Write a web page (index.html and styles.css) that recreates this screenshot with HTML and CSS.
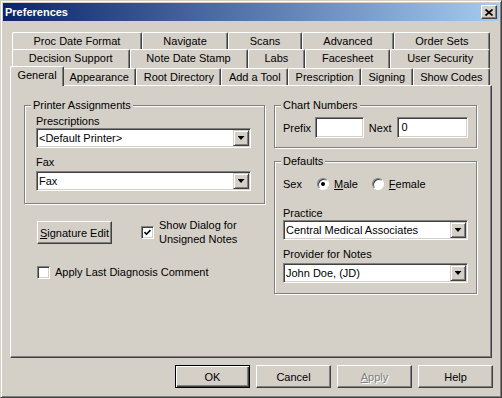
FILE: index.html
```html
<!DOCTYPE html>
<html>
<head>
    <meta charset="utf-8" />
    <title>Preferences</title>
    <link rel="stylesheet" href="styles.css">
</head>
<body>
    <div class="window">
        <div class="titlebar">
            <span class="title">Preferences</span>
            <span class="close">
                <svg width="8" height="7" viewBox="0 0 8 7"><path d="M0.5 0.5 L7.5 6.5 M7.5 0.5 L0.5 6.5" stroke="#000" stroke-width="1.7" fill="none" /></svg>
            </span>
        </div>
        <div class="client">
            <div class="tabs">
                <div class="tab-row">
                    <div class="tab">Proc Date Format</div>
                    <div class="tab">Navigate</div>
                    <div class="tab">Scans</div>
                    <div class="tab">Advanced</div>
                    <div class="tab">Order Sets</div>
                </div>
                <div class="tab-row">
                    <div class="tab">Decision Support</div>
                    <div class="tab">Note Date Stamp</div>
                    <div class="tab">Labs</div>
                    <div class="tab">Facesheet</div>
                    <div class="tab">User Security</div>
                </div>
                <div class="tab-row front">
                    <div class="tab active">General</div>
                    <div class="tab">Appearance</div>
                    <div class="tab">Root Directory</div>
                    <div class="tab">Add a Tool</div>
                    <div class="tab">Prescription</div>
                    <div class="tab">Signing</div>
                    <div class="tab">Show Codes</div>
                </div>
            </div>

            <div class="panel">
                <div class="col">
                    <div class="group">
                        <div class="group-title">Printer Assignments</div>
                        <div class="group-body printer">
                            <div class="label">Prescriptions</div>
                            <div class="combo"><span class="combo-text">&lt;Default Printer&gt;</span><span class="combo-btn"><span class="arrow"></span></span></div>
                            <div class="label second">Fax</div>
                            <div class="combo lower"><span class="combo-text">Fax</span><span class="combo-btn"><span class="arrow"></span></span></div>
                        </div>
                    </div>

                    <div class="sig-row">
                        <button class="btn"><span><u>S</u>ignature Edit</span></button>
                        <span class="check checked sig-check">
                            <svg width="7" height="7" viewBox="0 0 7 7"><path d="M0.5 3 L2.5 5.2 L6.5 1" stroke="#000" stroke-width="1.6" fill="none" /></svg>
                        </span>
                        <span class="check-text">Show Dialog for<br>Unsigned Notes</span>
                    </div>

                    <div class="apply-row">
                        <span class="check"></span>
                        <span class="apply-text">Apply Last Diagnosis Comment</span>
                    </div>
                </div>

                <div class="col">
                    <div class="group">
                        <div class="group-title">Chart Numbers</div>
                        <div class="group-body chart">
                            <div class="chart-row">
                                <span>Prefix</span>
                                <span class="field prefix"></span>
                                <span class="next-label">Next</span>
                                <span class="field next">0</span>
                            </div>
                        </div>
                    </div>

                    <div class="group defaults">
                        <div class="group-title">Defaults</div>
                        <div class="group-body right">
                            <div class="sex-row">
                                <span class="sex-label">Sex</span>
                                <span class="radio on"></span>
                                <span class="radio-text"><u>M</u>ale</span>
                                <span class="radio female"></span>
                                <span class="radio-text"><u>F</u>emale</span>
                            </div>
                            <div class="label practice">Practice</div>
                            <div class="combo"><span class="combo-text">Central Medical Associates</span><span class="combo-btn"><span class="arrow"></span></span></div>
                            <div class="label second">Provider for Notes</div>
                            <div class="combo lower"><span class="combo-text">John Doe, (JD)</span><span class="combo-btn"><span class="arrow"></span></span></div>
                        </div>
                    </div>
                </div>
            </div>

            <div class="buttons">
                <button class="btn default">OK</button>
                <button class="btn">Cancel</button>
                <button class="btn disabled"><span><u>A</u>pply</span></button>
                <button class="btn">Help</button>
            </div>
        </div>
    </div>
</body>
</html>
```

FILE: styles.css
```css
* {
    box-sizing: border-box;
}

html, body {
    margin: 0;
    background-color: #d4d0c8;
    font-family: "Liberation Sans", Arial, sans-serif;
    font-size: 11px;
    color: #000;
}

.window {
    width: 502px;
    height: 398px;
    padding: 2px;
    border: 1px solid;
    border-color: #d4d0c8 #404040 #404040 #d4d0c8;
    box-shadow: inset 1px 1px #fff, inset -1px -1px #808080;
    background-color: #d4d0c8;
}

.titlebar {
    height: 18px;
    display: flex;
    align-items: center;
    justify-content: space-between;
    padding: 0 2px;
    background: linear-gradient(to right, #0a246a, #a6caf0);
}

.title {
    color: #fff;
    font-weight: bold;
    line-height: 18px;
}

.close {
    width: 16px;
    height: 14px;
    display: flex;
    align-items: center;
    justify-content: center;
    background-color: #d4d0c8;
    border: 1px solid;
    border-color: #fff #404040 #404040 #fff;
    box-shadow: inset -1px -1px #808080;
}

.client {
    padding: 11px 7px 0 7px;
}

/* tabs */
.tabs {
    padding: 0 2px;
}

.tab-row {
    display: flex;
    height: 17px;
}

.tab {
    flex: 1 1 auto;
    height: 19px;
    padding: 0 4px;
    border: 1px solid;
    border-bottom: 0;
    border-color: #fff #404040 #404040 #fff;
    border-radius: 2px 2px 0 0;
    box-shadow: inset -1px 0 #808080;
    background-color: #d4d0c8;
    text-align: center;
    line-height: 16px;
    white-space: nowrap;
}

.front {
    height: 19px;
}

.front .tab {
    margin-top: 2px;
    height: 17px;
}

.front .tab.active {
    position: relative;
    z-index: 1;
    margin: 0 -2px;
    height: 20px;
}

.panel {
    height: 273px;
    display: grid;
    grid-template-columns: 241px 203px;
    column-gap: 9px;
    align-content: start;
    padding: 19px 0 0 13px;
    border: 1px solid;
    border-color: #fff #404040 #404040 #fff;
    box-shadow: inset -1px -1px #808080;
}

/* group boxes */
.group {
    border: 1px solid #808080;
    box-shadow: inset 1px 1px #fff, 1px 1px #fff;
}

.group-title {
    width: max-content;
    margin: -7px 0 0 6px;
    padding: 0 2px;
    line-height: 13px;
    background-color: #d4d0c8;
}

.printer {
    padding: 0 13px 12px 11px;
}

.chart {
    padding: 0 8px 9px 8px;
}

.right {
    padding: 0 8px 10px 8px;
}

.label {
    margin-top: 3px;
    line-height: 13px;
}

.label.second {
    margin-top: 8px;
}

.label.practice {
    margin-top: 16px;
}

.combo {
    display: flex;
    height: 20px;
    padding: 1px;
    background-color: #fff;
    border: 1px solid;
    border-color: #808080 #fff #fff #808080;
    box-shadow: inset 1px 1px #404040, inset -1px -1px #d4d0c8;
}

.combo.lower {
    margin-top: 2px;
}

.combo-text {
    flex: 1;
    padding-left: 1px;
    line-height: 16px;
    white-space: nowrap;
}

.combo-btn {
    width: 16px;
    height: 16px;
    display: flex;
    align-items: center;
    justify-content: center;
    background-color: #d4d0c8;
    border: 1px solid;
    border-color: #d4d0c8 #404040 #404040 #d4d0c8;
    box-shadow: inset 1px 1px #fff, inset -1px -1px #808080;
}

.arrow {
    width: 7px;
    height: 4px;
    background-color: #000;
    clip-path: polygon(0 0, 100% 0, 50% 100%);
}

.field {
    height: 21px;
    padding: 1px 3px;
    line-height: 17px;
    background-color: #fff;
    border: 1px solid;
    border-color: #808080 #fff #fff #808080;
    box-shadow: inset 1px 1px #404040, inset -1px -1px #d4d0c8;
}

.chart-row {
    display: flex;
    align-items: center;
    margin-top: 5px;
}

.prefix {
    width: 49px;
    margin-left: 4px;
}

.next-label {
    margin-left: 5px;
}

.next {
    width: 71px;
    margin-left: 6px;
}

.defaults {
    margin-top: 13px;
}

.sex-row {
    display: flex;
    align-items: center;
    height: 14px;
    margin-top: 9px;
}

.sex-label {
    width: 34px;
}

.radio {
    width: 12px;
    height: 12px;
    display: flex;
    align-items: center;
    justify-content: center;
    border-radius: 50%;
    background-color: #fff;
    border: 1px solid;
    border-color: #808080 #fff #fff #808080;
    box-shadow: inset 1px 1px #404040;
}

.radio.on::after {
    content: "";
    width: 4px;
    height: 4px;
    border-radius: 50%;
    background-color: #000;
}

.radio.female {
    margin-left: 14px;
}

.radio-text {
    margin-left: 5px;
}

/* check boxes and buttons */
.check {
    width: 13px;
    height: 13px;
    display: flex;
    align-items: center;
    justify-content: center;
    flex-shrink: 0;
    background-color: #fff;
    border: 1px solid;
    border-color: #808080 #fff #fff #808080;
    box-shadow: inset 1px 1px #404040, inset -1px -1px #d4d0c8;
}

.sig-row {
    display: flex;
    align-items: flex-start;
    margin: 17px 0 0 13px;
}

.sig-check {
    margin: 5px 0 0 29px;
}

.check-text {
    margin: -3px 0 0 5px;
    line-height: 14px;
}

.apply-row {
    display: flex;
    align-items: center;
    margin: 19px 0 0 13px;
}

.apply-text {
    margin-left: 5px;
    line-height: 14px;
}

.btn {
    width: 75px;
    height: 23px;
    padding: 0;
    font-family: "Liberation Sans", Arial, sans-serif;
    font-size: 11px;
    color: #000;
    background-color: #d4d0c8;
    border: 1px solid;
    border-color: #fff #404040 #404040 #fff;
    box-shadow: inset -1px -1px #808080;
}

.btn.default {
    border-color: #000;
    box-shadow: inset 1px 1px #fff, inset -1px -1px #404040, inset -2px -2px #808080;
}

.btn.disabled {
    color: #808080;
    text-shadow: 1px 1px #fff;
}

.buttons {
    display: flex;
    justify-content: flex-end;
    gap: 6px;
    margin: 7px -1px 0 0;
}
```
